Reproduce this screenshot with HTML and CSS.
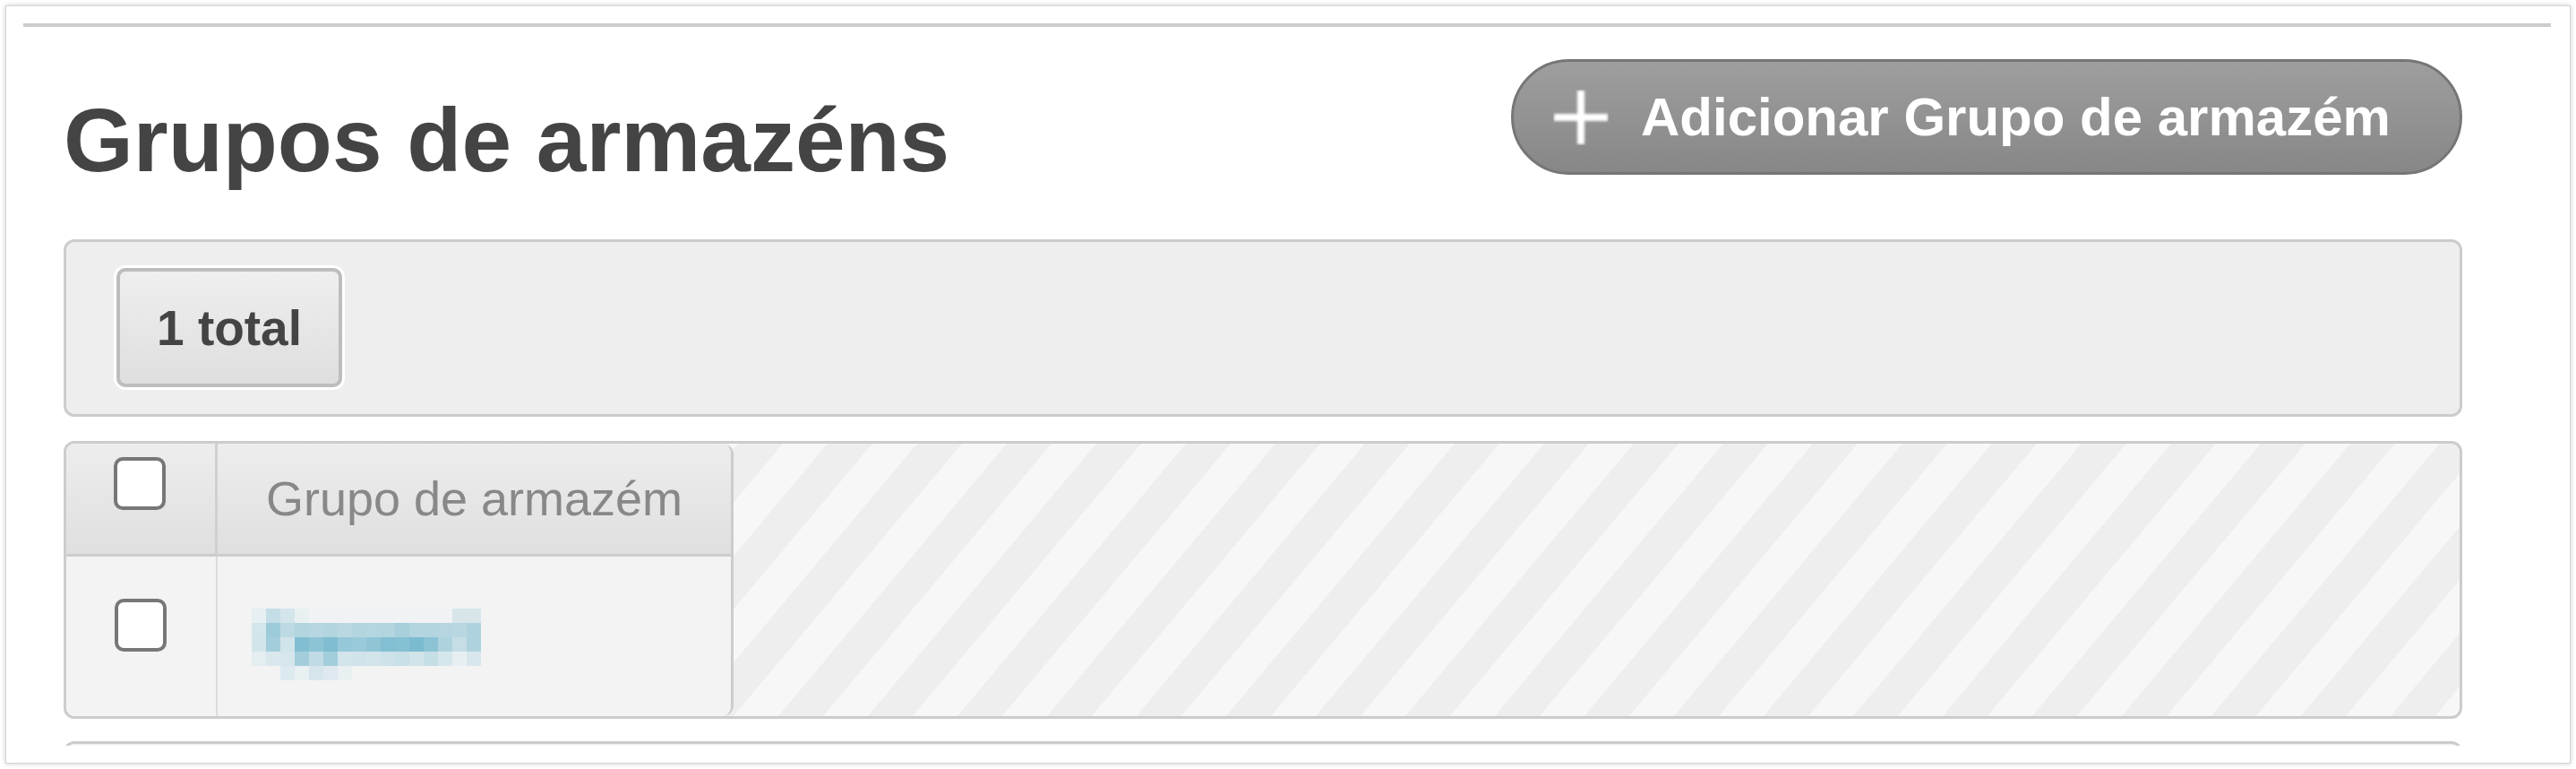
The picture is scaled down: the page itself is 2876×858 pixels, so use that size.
FILE: index.html
```html
<!DOCTYPE html>
<html lang="pt">
<head>
<meta charset="utf-8">
<title>Grupos de armazéns</title>
<link rel="stylesheet" href="styles.css">
</head>
<body>
<div class="panel">
  <div class="scroll">
    <div class="rule"></div>
    <div class="content">
      <div class="page-head">
        <h1 class="title">Grupos de armazéns</h1>
        <a class="add-btn" href="#">
          <svg class="plus" width="62" height="62" viewBox="0 0 62 62">
            <defs>
              <filter id="soft" x="-30%" y="-30%" width="160%" height="160%">
                <feGaussianBlur stdDeviation="1.6"/>
              </filter>
            </defs>
            <g filter="url(#soft)" fill="#ffffff">
              <rect x="27" y="1" width="8" height="60"/>
              <rect x="1" y="27" width="60" height="8"/>
            </g>
          </svg>
          <span class="add-label">Adicionar Grupo de armazém</span>
        </a>
      </div>

      <div class="toolbar">
        <span class="total">1 total</span>
      </div>

      <div class="grid-box">
        <div class="grid">
          <div class="grid-head">
            <div class="cell-check head-check"><span class="cb"></span></div>
            <div class="cell-name head-name">Grupo de armazém</div>
          </div>
          <div class="grid-row">
            <div class="cell-check row-check"><span class="cb"></span></div>
            <div class="cell-name row-name">
              <svg class="mosaic" width="256" height="80" viewBox="0 0 16 5" shape-rendering="crispEdges">
                <rect x="0" y="0" width="1" height="1" fill="#e6eff2"/>
                <rect x="1" y="0" width="1" height="1" fill="#c4dde6"/>
                <rect x="2" y="0" width="1" height="1" fill="#d3e5eb"/>
                <rect x="3" y="0" width="1" height="1" fill="#e9f0f2"/>
                <rect x="4" y="0" width="10" height="1" fill="#f0f2f3"/>
                <rect x="14" y="0" width="2" height="1" fill="#d8e6eb"/>

                <rect x="0" y="1" width="1" height="1" fill="#d4e6ec"/>
                <rect x="1" y="1" width="1" height="1" fill="#9ccad9"/>
                <rect x="2" y="1" width="1" height="1" fill="#bddae3"/>
                <rect x="3" y="1" width="1" height="1" fill="#b2d5e0"/>
                <rect x="4" y="1" width="1" height="1" fill="#b6d7e1"/>
                <rect x="5" y="1" width="1" height="1" fill="#b2d5e0"/>
                <rect x="6" y="1" width="1" height="1" fill="#bad8e2"/>
                <rect x="7" y="1" width="1" height="1" fill="#b2d5e0"/>
                <rect x="8" y="1" width="1" height="1" fill="#b4d6e1"/>
                <rect x="9" y="1" width="1" height="1" fill="#b2d5e0"/>
                <rect x="10" y="1" width="1" height="1" fill="#a7cfdc"/>
                <rect x="11" y="1" width="2" height="1" fill="#b2d5e0"/>
                <rect x="13" y="1" width="1" height="1" fill="#b5d6e1"/>
                <rect x="14" y="1" width="1" height="1" fill="#b7d7e1"/>
                <rect x="15" y="1" width="1" height="1" fill="#afd3de"/>

                <rect x="0" y="2" width="1" height="1" fill="#d2e5eb"/>
                <rect x="1" y="2" width="1" height="1" fill="#a3cddb"/>
                <rect x="2" y="2" width="1" height="1" fill="#d1e4ea"/>
                <rect x="3" y="2" width="1" height="1" fill="#82bed2"/>
                <rect x="4" y="2" width="1" height="1" fill="#8cc3d5"/>
                <rect x="5" y="2" width="1" height="1" fill="#80bdd0"/>
                <rect x="6" y="2" width="1" height="1" fill="#95c8d8"/>
                <rect x="7" y="2" width="1" height="1" fill="#99cada"/>
                <rect x="8" y="2" width="1" height="1" fill="#90c5d6"/>
                <rect x="9" y="2" width="1" height="1" fill="#83bfd2"/>
                <rect x="10" y="2" width="1" height="1" fill="#86c0d3"/>
                <rect x="11" y="2" width="1" height="1" fill="#7bbbcf"/>
                <rect x="12" y="2" width="1" height="1" fill="#8bc3d5"/>
                <rect x="13" y="2" width="1" height="1" fill="#afd3de"/>
                <rect x="14" y="2" width="1" height="1" fill="#c5dee6"/>
                <rect x="15" y="2" width="1" height="1" fill="#aed3de"/>

                <rect x="0" y="3" width="1" height="1" fill="#e4edf0"/>
                <rect x="1" y="3" width="1" height="1" fill="#dae8ed"/>
                <rect x="2" y="3" width="1" height="1" fill="#d6e6ec"/>
                <rect x="3" y="3" width="1" height="1" fill="#a3cddb"/>
                <rect x="4" y="3" width="1" height="1" fill="#c1dbe4"/>
                <rect x="5" y="3" width="1" height="1" fill="#a2cddb"/>
                <rect x="6" y="3" width="1" height="1" fill="#d3e5eb"/>
                <rect x="7" y="3" width="1" height="1" fill="#d0e3ea"/>
                <rect x="8" y="3" width="1" height="1" fill="#d3e5eb"/>
                <rect x="9" y="3" width="1" height="1" fill="#cde2e9"/>
                <rect x="10" y="3" width="1" height="1" fill="#c8e0e7"/>
                <rect x="11" y="3" width="1" height="1" fill="#d1e4ea"/>
                <rect x="12" y="3" width="1" height="1" fill="#c6dfe7"/>
                <rect x="13" y="3" width="1" height="1" fill="#d5e6ec"/>
                <rect x="14" y="3" width="1" height="1" fill="#e8eff2"/>
                <rect x="15" y="3" width="1" height="1" fill="#d8e7ec"/>

                <rect x="2" y="4" width="1" height="1" fill="#dce9ee"/>
                <rect x="3" y="4" width="1" height="1" fill="#e9f0f2"/>
                <rect x="4" y="4" width="1" height="1" fill="#d5e5eb"/>
                <rect x="5" y="4" width="1" height="1" fill="#dde9ee"/>
                <rect x="6" y="4" width="1" height="1" fill="#e9f0f2"/>
              </svg>
            </div>
          </div>
        </div>
      </div>

      <div class="next-box"></div>
    </div>
  </div>
</div>
</body>
</html>
```

FILE: styles.css
```css
* {
  box-sizing: border-box;
}

html, body {
  margin: 0;
  padding: 0;
  background: #ffffff;
}

body {
  font-family: "Liberation Sans", Arial, Helvetica, sans-serif;
  color: #444444;
}

.panel {
  margin: 6px;
  height: 846px;
  border: 1px solid #d6d6d6;
  box-shadow: 0 0 5px rgba(0, 0, 0, 0.22);
  background: #ffffff;
  padding: 19px 21px 19px 19px;
  display: flex;
  flex-direction: column;
}

.scroll {
  flex: 1;
  overflow: hidden;
}

.rule {
  height: 4px;
  background: #cccccc;
}

.content {
  margin: 0 99px 0 45px;
}

/* ---------- heading ---------- */
.page-head {
  margin-top: 36px;
  display: flex;
  justify-content: space-between;
  align-items: flex-start;
}

.title {
  margin: 40px 0 0 0;
  font-size: 100px;
  line-height: 100px;
  font-weight: bold;
  color: #444444;
  white-space: nowrap;
}

.add-btn {
  width: 1062px;
  height: 129px;
  border: 3px solid #767676;
  border-radius: 70px;
  background: linear-gradient(#9e9e9e, #878787);
  display: flex;
  align-items: center;
  gap: 36px;
  padding-left: 44px;
  text-decoration: none;
  color: #ffffff;
}

.plus {
  display: block;
  flex: none;
}

.add-label {
  font-size: 60px;
  line-height: 1;
  font-weight: bold;
  color: #ffffff;
  white-space: nowrap;
}

/* ---------- toolbar ---------- */
.toolbar {
  margin-top: 61px;
  height: 198px;
  border: 3px solid #cccccc;
  border-radius: 12px;
  background: #eeeeee;
  padding: 29px 0 30px 56px;
  display: flex;
  align-items: flex-start;
}

.total {
  width: 252px;
  height: 133px;
  border: 4px solid #bdbdbd;
  border-radius: 10px;
  box-shadow: 0 0 0 3px #ffffff;
  background: linear-gradient(#efefef, #dedede);
  display: flex;
  align-items: center;
  justify-content: center;
  font-size: 55px;
  font-weight: bold;
  color: #444444;
  white-space: nowrap;
}

/* ---------- grid ---------- */
.grid-box {
  margin-top: 27px;
  height: 310px;
  border: 3px solid #cccccc;
  border-radius: 12px;
  overflow: hidden;
  background: repeating-linear-gradient(130deg, #f7f7f7 0 38.3px, #eeeeee 38.3px 76.6px);
}

.grid {
  width: 745px;
  height: 100%;
  border-right: 3px solid #cccccc;
  border-radius: 0 12px 12px 0;
  overflow: hidden;
  display: flex;
  flex-direction: column;
}

.grid-head {
  height: 126px;
  border-bottom: 3px solid #cccccc;
  background: linear-gradient(#ededed, #dfdfdf);
  display: flex;
}

.grid-row {
  flex: 1;
  background: #f3f3f3;
  display: flex;
}

.cell-check {
  width: 169px;
  flex: none;
  display: flex;
  justify-content: center;
  align-items: flex-start;
  padding-right: 3px;
}

.head-check {
  border-right: 3px solid #d0d0d0;
  padding-top: 15px;
}

.row-check {
  border-right: 2px solid #dddddd;
  padding-top: 47px;
  padding-right: 2px;
}

.cb {
  display: block;
  width: 58px;
  height: 59px;
  border: 4px solid #777777;
  border-radius: 10px;
  background: #ffffff;
}

.cell-name {
  flex: 1;
}

.head-name {
  text-align: center;
  font-size: 54px;
  line-height: 123px;
  color: #888888;
  white-space: nowrap;
}

.row-name {
  padding: 58px 0 0 38px;
}

.mosaic {
  display: block;
}

/* ---------- next block (clipped) ---------- */
.next-box {
  margin-top: 25px;
  height: 120px;
  border: 3px solid #cccccc;
  border-bottom: none;
  border-radius: 12px 12px 0 0;
  background: linear-gradient(#eeeeee, #ffffff 3px);
}
```
